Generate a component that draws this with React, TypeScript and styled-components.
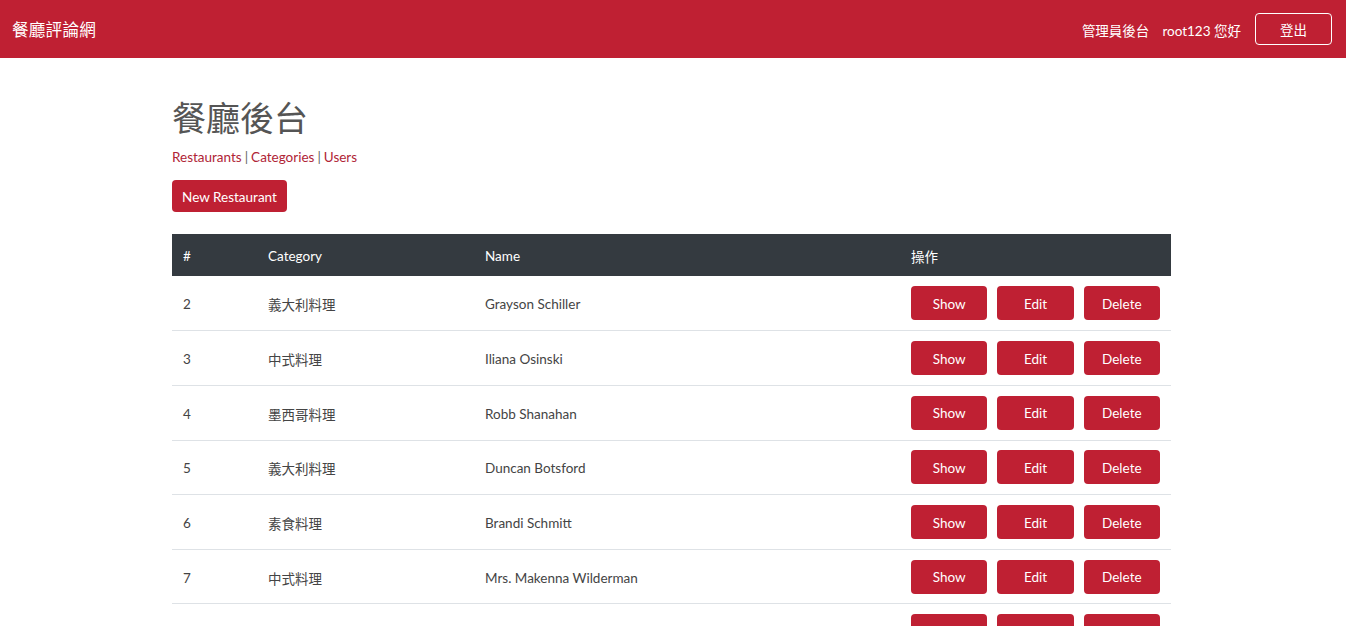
import React from "react";
import styled, { createGlobalStyle } from "styled-components";

const RED = "#bf2033";
const FONT = `Lato, "Noto Sans CJK TC", "Noto Sans CJK SC", sans-serif`;

const Global = createGlobalStyle`
  html, body { margin: 0; padding: 0; background: #fff; }
  body { font-family: ${FONT}; font-size: 13.5px; color: #444; }
  * { box-sizing: border-box; }
`;

const NavBar = styled.nav`
  height: 58px;
  background: ${RED};
  display: flex;
  align-items: center;
  justify-content: space-between;
  padding: 0 14px 0 12px;
  color: #fff;
`;

const Brand = styled.a`
  font-size: 16.6px;
  color: #fff;
  text-decoration: none;
  letter-spacing: 0.2px;
`;

const NavRight = styled.div`
  display: flex;
  align-items: center;
  gap: 13px;
  font-size: 13.5px;
  padding-top: 1px;
`;

const NavLink = styled.a`
  color: #fff;
  text-decoration: none;
`;

const Logout = styled.button`
  margin-left: 1px;
  width: 77px;
  height: 32px;
  margin-top: -1px;
  border: 1px solid #fff;
  border-radius: 4px;
  background: transparent;
  color: #fff;
  font-family: ${FONT};
  font-size: 13.5px;
  padding: 0;
`;

const Main = styled.main`
  width: 999px;
  margin-left: calc(50% - 501px);
  padding-top: 39px;
`;

const Title = styled.h1`
  margin: 0;
  font-size: 34px;
  line-height: 41px;
  font-weight: 400;
  color: #555;
`;

const SubNav = styled.div`
  margin-top: 9px;
  line-height: 20px;
  color: #555;
`;

const SubLink = styled.a`
  color: #b02436;
  text-decoration: none;
`;

const Sep = styled.span`
  margin: 0 3px;
  color: #666;
`;

const RedButton = styled.button<{ $w?: number; $h?: number }>`
  width: ${(p) => p.$w ?? 77}px;
  height: ${(p) => p.$h ?? 34}px;
  border: none;
  border-radius: 4px;
  background: ${RED};
  color: #fff;
  font-family: ${FONT};
  font-size: 13.5px;
  padding: 1px 0 0;
`;

const NewBtnRow = styled.div`
  margin-top: 13px;
  margin-bottom: 22px;
`;

const Table = styled.table`
  width: 999px;
  border-collapse: collapse;
  table-layout: fixed;
`;

const Th = styled.th<{ $w: number }>`
  width: ${(p) => p.$w}px;
  height: 42.4px;
  background: #343a40;
  color: #fff;
  font-weight: 400;
  text-align: left;
  padding: 2px 11px 0;
`;

const Td = styled.td`
  height: 54.6px;
  padding: 2px 11px 0;
  border-bottom: 1px solid #dee2e6;
  vertical-align: middle;
  color: #444;
`;

const Actions = styled.div`
  display: flex;
  gap: 10px;
  margin-top: -2px;
`;

const rows = [
  { id: 2, cat: "義大利料理", name: "Grayson Schiller" },
  { id: 3, cat: "中式料理", name: "Iliana Osinski" },
  { id: 4, cat: "墨西哥料理", name: "Robb Shanahan" },
  { id: 5, cat: "義大利料理", name: "Duncan Botsford" },
  { id: 6, cat: "素食料理", name: "Brandi Schmitt" },
  { id: 7, cat: "中式料理", name: "Mrs. Makenna Wilderman" },
  { id: 8, cat: "日本料理", name: "Ms. Destiny Kuhn" },
];

export default function App() {
  return (
    <>
      <Global />
      <NavBar>
        <Brand href="#">餐廳評論網</Brand>
        <NavRight>
          <NavLink href="#">管理員後台</NavLink>
          <span>root123 您好</span>
          <Logout>登出</Logout>
        </NavRight>
      </NavBar>
      <Main>
        <Title>餐廳後台</Title>
        <SubNav>
          <SubLink href="#">Restaurants</SubLink>
          <Sep>|</Sep>
          <SubLink href="#">Categories</SubLink>
          <Sep>|</Sep>
          <SubLink href="#">Users</SubLink>
        </SubNav>
        <NewBtnRow>
          <RedButton $w={115} $h={32}>New Restaurant</RedButton>
        </NewBtnRow>
        <Table>
          <thead>
            <tr>
              <Th $w={85}>#</Th>
              <Th $w={217}>Category</Th>
              <Th $w={426}>Name</Th>
              <Th $w={271}>操作</Th>
            </tr>
          </thead>
          <tbody>
            {rows.map((r) => (
              <tr key={r.id}>
                <Td>{r.id}</Td>
                <Td>{r.cat}</Td>
                <Td>{r.name}</Td>
                <Td>
                  <Actions>
                    <RedButton>Show</RedButton>
                    <RedButton>Edit</RedButton>
                    <RedButton>Delete</RedButton>
                  </Actions>
                </Td>
              </tr>
            ))}
          </tbody>
        </Table>
      </Main>
    </>
  );
}
